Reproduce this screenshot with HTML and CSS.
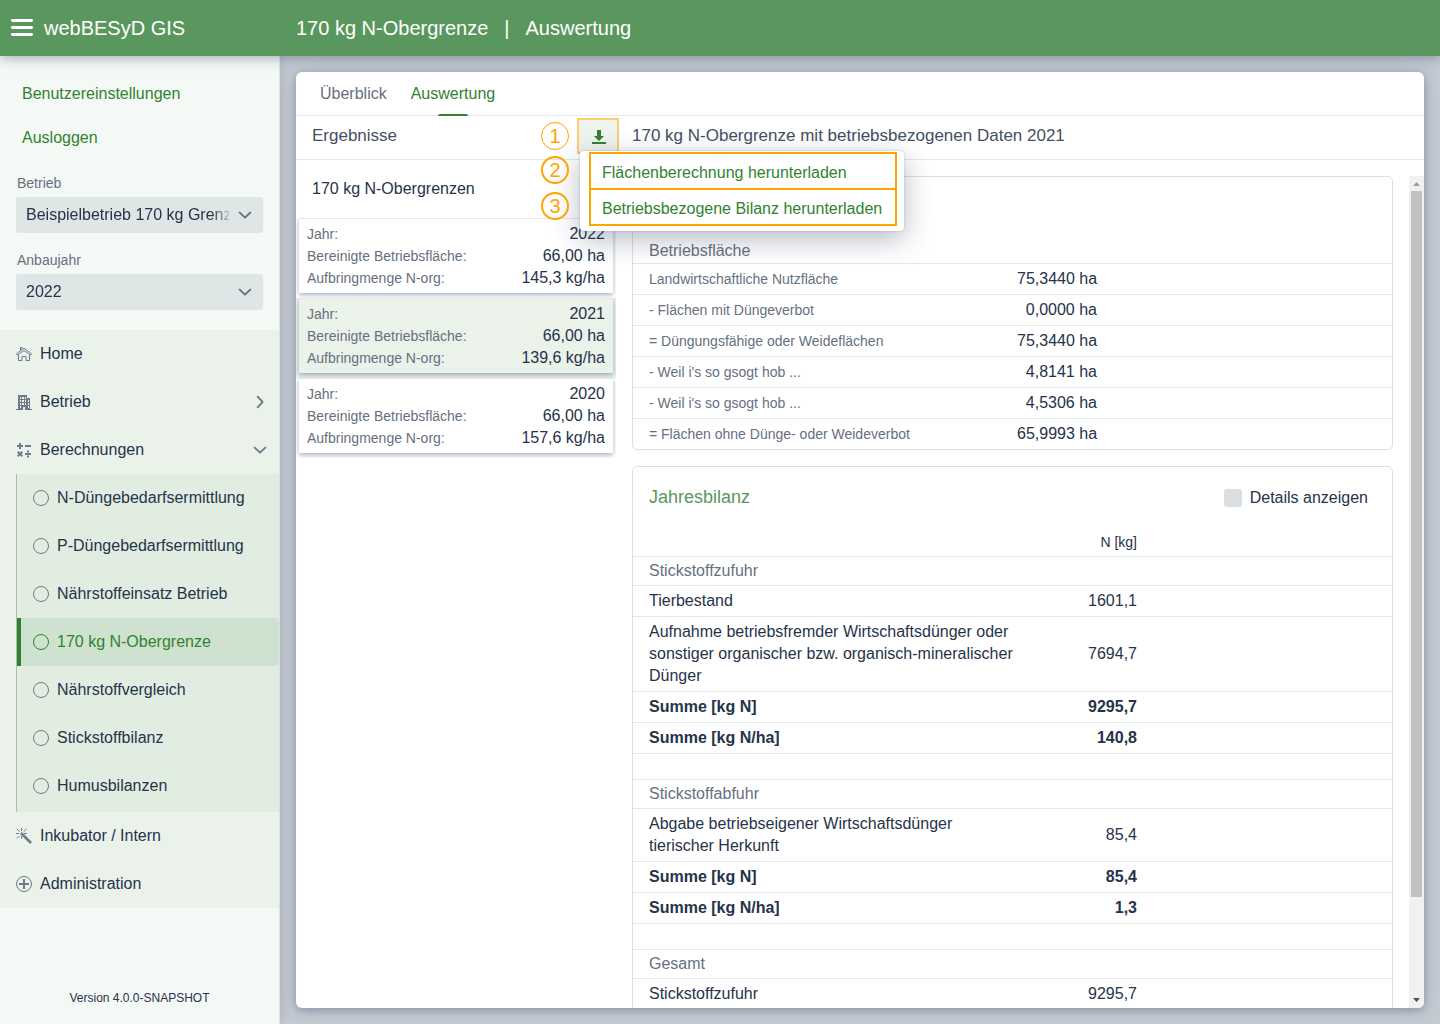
FILE: index.html
```html
<!DOCTYPE html>
<html lang="de">
<head>
<meta charset="utf-8">
<meta name="viewport" content="width=device-width, initial-scale=1">
<title>webBESyD GIS – 170 kg N-Obergrenze</title>
<link rel="stylesheet" href="styles.css">
</head>
<body>
<svg class="sprite" aria-hidden="true">
  <symbol id="chevron" viewBox="0 0 16 16"><path d="M2.700 5.600 8 10.600l5.300-5" fill="none" stroke="currentColor" stroke-width="1.900" stroke-linecap="round" stroke-linejoin="round"/></symbol>
  <symbol id="circle" viewBox="0 0 16 16"><circle cx="8" cy="8" r="7.500" fill="none" stroke="currentColor"/></symbol>
</svg>

<header class="topbar">
  <div class="brand">
    <button class="burger" type="button" aria-label="Menü"><svg width="24" height="24" viewBox="0 0 24 24"><path d="M2.400 4.500h19.200M2.400 11.500h19.200M2.400 18.500h19.200" stroke="currentColor" stroke-width="2.900" stroke-linecap="round"/></svg></button>
    <span>webBESyD GIS</span>
  </div>
  <h1 class="page-title"><span>170 kg N-Obergrenze</span><span>|</span><span>Auswertung</span></h1>
</header>

<div class="layout">
  <aside class="sidebar">
    <div class="account">
      <a href="#einstellungen">Benutzereinstellungen</a>
      <a href="#ausloggen">Ausloggen</a>
    </div>
    <div class="field">
      <label for="betrieb">Betrieb</label>
      <div class="select-box">
        <select id="betrieb"><option>Beispielbetrieb 170 kg Grenze</option></select>
        <svg width="16" height="16"><use href="#chevron"/></svg>
      </div>
    </div>
    <div class="field">
      <label for="jahr">Anbaujahr</label>
      <div class="select-box">
        <select id="jahr"><option>2022</option></select>
        <svg width="16" height="16"><use href="#chevron"/></svg>
      </div>
    </div>
    <nav class="menu">
      <a class="item" href="#home"><svg width="16" height="16" viewBox="0 0 16 16" fill="none" stroke="currentColor"><path d="M4.500 4.200V1.500h1.500v1.700M.5 7.800 8 2.200l7.500 5.600-.9 1.300L8 4.500 1.400 9.100z"/><path d="M2.500 8.500v6h3.500v-4h4v4h3.500v-6"/></svg>Home</a>
      <a class="item" href="#betrieb-menu"><svg width="16" height="16" viewBox="0 0 16 16"><path fill="currentColor" fill-rule="evenodd" d="M2 1h9v3h3v11h2v1H9v-3H7v3H0v-1h2zM4 3v2h1V3zm2 0v2h2V3zm3 0v2h1V3zM4 6v2h1V6zm2 0v2h2V6zm3 0v2h1V6zM4 9v2h1V9zm2 0v2h2V9zm3 0v2h1V9zm3-3v2h1V6zm0 3v2h1V9zm0 3v2h1v-2zm-8 0v2h1v-2z"/></svg>Betrieb<svg class="toggle closed" width="16" height="16"><use href="#chevron"/></svg></a>
      <a class="item" href="#berechnungen"><svg width="16" height="16" viewBox="0 0 16 16" fill="none" stroke="currentColor" stroke-width="2"><path d="M1 4h6M4 1v6M9 4h6M9 12h6M1.700 9.700l4.600 4.600M6.300 9.700l-4.600 4.600"/><path d="M12 8.500v2M12 13.500v2"/></svg>Berechnungen<svg class="toggle" width="16" height="16"><use href="#chevron"/></svg></a>
      <div class="submenu">
        <a class="item" href="#n"><svg width="16" height="16"><use href="#circle"/></svg>N-Düngebedarfsermittlung</a>
        <a class="item" href="#p"><svg width="16" height="16"><use href="#circle"/></svg>P-Düngebedarfsermittlung</a>
        <a class="item" href="#einsatz"><svg width="16" height="16"><use href="#circle"/></svg>Nährstoffeinsatz Betrieb</a>
        <a class="item current" href="#obergrenze" aria-current="page"><svg width="16" height="16"><use href="#circle"/></svg>170 kg N-Obergrenze</a>
        <a class="item" href="#vergleich"><svg width="16" height="16"><use href="#circle"/></svg>Nährstoffvergleich</a>
        <a class="item" href="#bilanz"><svg width="16" height="16"><use href="#circle"/></svg>Stickstoffbilanz</a>
        <a class="item" href="#humus"><svg width="16" height="16"><use href="#circle"/></svg>Humusbilanzen</a>
      </div>
      <a class="item" href="#inkubator"><svg width="16" height="16" viewBox="0 0 16 16" fill="none" stroke="currentColor"><path d="M5.500 0v3M0 5.500h3M8 5.500h3M5.500 8v3M.8.8l2.800 2.800M10.500.8 7.700 3.600M.8 10.500l2.800-2.800"/><path stroke-width="2.600" d="m5 5 10 10"/></svg>Inkubator / Intern</a>
      <a class="item" href="#administration"><svg width="16" height="16" viewBox="0 0 16 16" fill="none" stroke="currentColor"><circle cx="8" cy="8" r="7.500"/><path stroke-width="2" d="M8 3v10M3 8h10"/></svg>Administration</a>
    </nav>
    <footer class="version">Version 4.0.0-SNAPSHOT</footer>
  </aside>

  <main class="content">
    <section class="panel">
      <nav class="tabs">
        <a href="#ueberblick">Überblick</a>
        <a class="active" href="#auswertung">Auswertung</a>
      </nav>
      <div class="toolbar">
        <div class="toolbar-left">
          <h2>Ergebnisse</h2>
          <div class="download">
            <span class="mark mark-first">1</span>
            <button class="download-button" type="button" aria-label="Herunterladen"><svg width="16" height="16" viewBox="0 0 16 16"><path fill="currentColor" d="M2 14h14v2H2zM7 2h4v6h3l-5 5-5-5h3z"/></svg></button>
            <div class="popup">
              <div class="popup-list">
                <button type="button">Flächenberechnung herunterladen</button>
                <button type="button">Betriebsbezogene Bilanz herunterladen</button>
              </div>
              <div class="marks"><span class="mark">2</span><span class="mark">3</span></div>
            </div>
          </div>
        </div>
        <h2>170 kg N-Obergrenze mit betriebsbezogenen Daten 2021</h2>
      </div>

      <div class="columns">
        <div class="results">
          <h3>170 kg N-Obergrenzen</h3>
          <div class="result">
            <dl>
              <div><dt>Jahr:</dt><dd>2022</dd></div>
              <div><dt>Bereinigte Betriebsfläche:</dt><dd>66,00 ha</dd></div>
              <div><dt>Aufbringmenge N-org:</dt><dd>145,3 kg/ha</dd></div>
            </dl>
          </div>
          <div class="result selected">
            <dl>
              <div><dt>Jahr:</dt><dd>2021</dd></div>
              <div><dt>Bereinigte Betriebsfläche:</dt><dd>66,00 ha</dd></div>
              <div><dt>Aufbringmenge N-org:</dt><dd>139,6 kg/ha</dd></div>
            </dl>
          </div>
          <div class="result">
            <dl>
              <div><dt>Jahr:</dt><dd>2020</dd></div>
              <div><dt>Bereinigte Betriebsfläche:</dt><dd>66,00 ha</dd></div>
              <div><dt>Aufbringmenge N-org:</dt><dd>157,6 kg/ha</dd></div>
            </dl>
          </div>
        </div>

        <div class="details">
          <div class="cards">
            <section class="card">
              <h4 class="area-title">Betriebsfläche</h4>
              <table class="area">
                <colgroup><col class="label-col"><col class="area-col"><col></colgroup>
                <tbody>
                  <tr><th scope="row">Landwirtschaftliche Nutzfläche</th><td>75,3440 ha</td><td></td></tr>
                  <tr><th scope="row">- Flächen mit Düngeverbot</th><td>0,0000 ha</td><td></td></tr>
                  <tr><th scope="row">= Düngungsfähige oder Weideflächen</th><td>75,3440 ha</td><td></td></tr>
                  <tr><th scope="row">- Weil i's so gsogt hob ...</th><td>4,8141 ha</td><td></td></tr>
                  <tr><th scope="row">- Weil i's so gsogt hob ...</th><td>4,5306 ha</td><td></td></tr>
                  <tr><th scope="row">= Flächen ohne Dünge- oder Weideverbot</th><td>65,9993 ha</td><td></td></tr>
                </tbody>
              </table>
            </section>
            <section class="card balance-card">
              <div class="card-head">
                <h3>Jahresbilanz</h3>
                <label class="check"><input type="checkbox">Details anzeigen</label>
              </div>
              <table class="balance">
                <colgroup><col class="label-col"><col class="balance-col"><col></colgroup>
                <thead><tr><td></td><th scope="col">N [kg]</th><td></td></tr></thead>
                <tbody>
                  <tr class="group"><th scope="rowgroup" colspan="3">Stickstoffzufuhr</th></tr>
                  <tr><th scope="row">Tierbestand</th><td>1601,1</td><td></td></tr>
                  <tr><th scope="row">Aufnahme betriebsfremder Wirtschaftsdünger oder sonstiger organischer bzw. organisch-mineralischer Dünger</th><td>7694,7</td><td></td></tr>
                  <tr class="sum"><th scope="row">Summe [kg N]</th><td>9295,7</td><td></td></tr>
                  <tr class="sum"><th scope="row">Summe [kg N/ha]</th><td>140,8</td><td></td></tr>
                  <tr class="blank"><td colspan="3"></td></tr>
                </tbody>
                <tbody>
                  <tr class="group"><th scope="rowgroup" colspan="3">Stickstoffabfuhr</th></tr>
                  <tr><th scope="row">Abgabe betriebseigener Wirtschaftsdünger tierischer Herkunft</th><td>85,4</td><td></td></tr>
                  <tr class="sum"><th scope="row">Summe [kg N]</th><td>85,4</td><td></td></tr>
                  <tr class="sum"><th scope="row">Summe [kg N/ha]</th><td>1,3</td><td></td></tr>
                  <tr class="blank"><td colspan="3"></td></tr>
                </tbody>
                <tbody>
                  <tr class="group"><th scope="rowgroup" colspan="3">Gesamt</th></tr>
                  <tr><th scope="row">Stickstoffzufuhr</th><td>9295,7</td><td></td></tr>
                </tbody>
              </table>
            </section>
          </div>
          <div class="scrollbar" aria-hidden="true">
            <svg class="up" width="15" height="15" viewBox="0 0 15 15"><path d="M4 10h7L7.500 6z"/></svg>
            <div class="track"><div class="thumb"></div></div>
            <svg width="15" height="15" viewBox="0 0 15 15"><path d="M4 5h7L7.500 9z"/></svg>
          </div>
        </div>
      </div>
    </section>
  </main>
</div>
</body>
</html>
```
FILE: styles.css
```css
:root {
  --text: #26334a;
  --muted: #66707f;
  --green: #31822f;
  --bar: #5a975e;
  --line: #e4e7ea;
  --orange: #ffa500;
}

* { box-sizing: border-box; }

body {
  display: flex;
  flex-direction: column;
  height: 100vh;
  margin: 0;
  overflow: hidden;
  background: #c5cbd3;
  color: var(--text);
  font: 16px/22px "Liberation Sans", Arial, sans-serif;
}

h1, h2, h3, h4, dl, dd { margin: 0; font-weight: 400; }
a { color: inherit; text-decoration: none; }
button, select, input { font: inherit; color: inherit; }
button { border: 0; background: none; cursor: pointer; }
svg { flex: none; }
.sprite { position: absolute; width: 0; height: 0; }

.topbar {
  position: relative;
  z-index: 3;
  display: flex;
  align-items: center;
  flex: none;
  height: 56px;
  background: var(--bar);
  color: #fff;
  font-size: 20px;
  box-shadow: 0 2px 12px rgba(40, 55, 90, .4);
}
.brand { display: flex; align-items: center; gap: 10px; width: 296px; padding-left: 10px; }
.burger { display: flex; padding: 0; }
.page-title { display: flex; gap: 16px; font-size: 20px; }

.layout { display: flex; flex: 1; min-height: 0; }

.sidebar {
  display: flex;
  flex-direction: column;
  flex: none;
  width: 280px;
  padding-top: 16px;
  background: #f4f9f5;
  border-right: 1px solid #dce3e6;
  box-shadow: 0 0 10px rgba(50, 65, 100, .22);
}
.account { display: flex; flex-direction: column; padding: 0 22px; color: var(--green); }
.account a { line-height: 36px; margin: 4px 0; }

.field { margin: 0 16px 16px; }
.account + .field { margin-top: 12px; }
.field label { display: block; height: 25px; padding-left: 1px; font-size: 14px; color: var(--muted); }
.select-box { display: flex; align-items: center; gap: 8px; height: 36px; border-radius: 3px; background: #dee6e6; color: #66707f; }
.select-box select {
  width: 213px;
  height: 36px;
  padding: 0 0 0 10px;
  border: 0;
  outline: 0;
  appearance: none;
  background: transparent;
  color: var(--text);
  mask-image: linear-gradient(to right, #000 195px, rgba(0, 0, 0, .2) 213px);
}
.field + .menu { margin-top: 4px; }

.menu { background: #eaf2ea; }
.item { display: flex; align-items: center; gap: 8px; height: 48px; padding: 0 11px 0 16px; }
.item svg { color: #6f7b88; }
.item .toggle { margin-left: auto; }
.closed { transform: rotate(-90deg); }
.submenu { margin-left: 16px; padding-bottom: 2px; border-left: 1px solid #a9bcb6; background: #e1ede1; }
.current { padding-left: 12px; border-left: 4px solid var(--green); border-radius: 0 3px 3px 0; background: #cfe2cf; color: var(--green); }
.item.current svg { color: var(--green); }
.version { margin-top: auto; padding-bottom: 15px; text-align: center; font-size: 12px; }

.content { display: flex; flex: 1; min-width: 0; padding: 16px; }
.panel {
  display: flex;
  flex-direction: column;
  flex: 1;
  min-width: 0;
  border-radius: 6px;
  background: #fff;
  box-shadow: 0 2px 8px rgba(50, 65, 100, .35), 0 2px 20px rgba(50, 65, 100, .14);
}

.tabs { display: flex; gap: 24px; height: 44px; padding: 0 24px; border-bottom: 1px solid var(--line); color: var(--muted); line-height: 43px; }
.tabs .active { display: flex; flex-direction: column; align-items: center; color: var(--green); }
.tabs .active::after { content: ""; flex: none; width: 30px; height: 2px; margin-top: -1px; border-radius: 2px 2px 0 0; background: var(--green); }

.toolbar { display: flex; align-items: center; height: 44px; border-bottom: 1px solid var(--line); }
.toolbar h2 { padding-bottom: 4px; font-size: 17px; color: #44505f; }
.toolbar-left { display: flex; justify-content: space-between; align-items: center; align-self: stretch; width: 336px; padding: 0 13px 0 16px; }

.download { position: relative; z-index: 2; align-self: flex-start; margin-top: 2px; }
.download-button {
  display: flex;
  align-items: center;
  justify-content: center;
  width: 42px;
  height: 36px;
  border: 2px solid #ffcb70;
  background: #eef3ee;
  color: var(--green);
}
.mark {
  display: flex;
  align-items: center;
  justify-content: center;
  width: 28px;
  height: 28px;
  border: 2px solid var(--orange);
  border-radius: 50%;
  color: var(--orange);
  font-size: 20px;
}
.mark-first { position: absolute; top: 4px; left: -36px; border-width: 1px; }
.popup {
  position: absolute;
  top: 33px;
  left: 3px;
  width: 324px;
  padding: 1px 7px 5px 9px;
  border-radius: 4px;
  background: #fff;
  box-shadow: 0 0 2px rgba(40, 55, 90, .3), 0 8px 28px rgba(40, 55, 90, .35);
}
.popup-list { display: flex; flex-direction: column; border: 2px solid var(--orange); }
.popup-list button { height: 34px; padding: 4px 11px 0; text-align: left; white-space: nowrap; color: var(--green); }
.popup-list button + button { height: 36px; border-top: 2px solid var(--orange); }
.marks { position: absolute; top: 5px; left: -39px; display: flex; flex-direction: column; gap: 8px; }

.columns { display: flex; flex: 1; min-height: 0; }
.results { flex: none; width: 320px; }
.results h3 { height: 58px; padding: 0 16px; font-size: 16px; line-height: 58px; }
.result { width: 320px; height: 80px; padding: 0 3px 5px; overflow: hidden; }
.result dl { height: 75px; padding: 4px 8px; border-top: 1px solid var(--line); background: #fff; box-shadow: 0 2px 5px rgba(40, 55, 90, .4); }
.result.selected, .selected dl { background: #eaf2ea; }
.result div { display: flex; justify-content: space-between; }
dt { font-size: 14px; color: var(--muted); }

.details { display: flex; flex: 1; min-width: 0; gap: 16px; padding: 16px 0 0 16px; }
.cards { display: flex; flex-direction: column; flex: 1; min-width: 0; gap: 16px; overflow: hidden; }
.card { flex: none; border: 1px solid #dbdfe3; border-radius: 5px; }
.balance-card { padding-bottom: 16px; }
.area-title { padding: 63px 16px 1px; font-size: 16px; color: var(--muted); }
.card-head { display: flex; align-items: center; justify-content: space-between; height: 60px; padding: 0 24px 0 16px; }
.card-head h3 { font-size: 18px; color: var(--bar); }
.check { display: flex; align-items: center; gap: 8px; padding-top: 2px; }
.check input { width: 18px; height: 18px; margin: 0; border-radius: 3px; appearance: none; background: #d9dfe3; }

table { width: 100%; table-layout: fixed; border-spacing: 0; }
.label-col { width: 384px; }
.area-col { width: 80px; }
.balance-col { width: 120px; }
th, td { padding: 4px 0; font-weight: 400; text-align: right; }
td { white-space: nowrap; }
tbody th, tbody td { border-top: 1px solid var(--line); }
tbody th { padding-left: 16px; text-align: left; }
.area th { font-size: 14px; color: var(--muted); }
thead th { padding: 4px 0 3px; font-size: 14px; }
.group th { padding: 3px 16px; color: var(--muted); }
.sum th, .sum td { font-weight: 700; }
.blank td { height: 26px; padding: 0; }

.scrollbar { display: flex; flex-direction: column; flex: none; width: 15px; border-radius: 0 0 6px 0; background: #f1f1f1; fill: #43525f; }
.scrollbar .up { fill: #98a0a6; }
.track { flex: 1; padding: 0 2px; }
.thumb { height: 88%; background: #c1c1c1; }
```
